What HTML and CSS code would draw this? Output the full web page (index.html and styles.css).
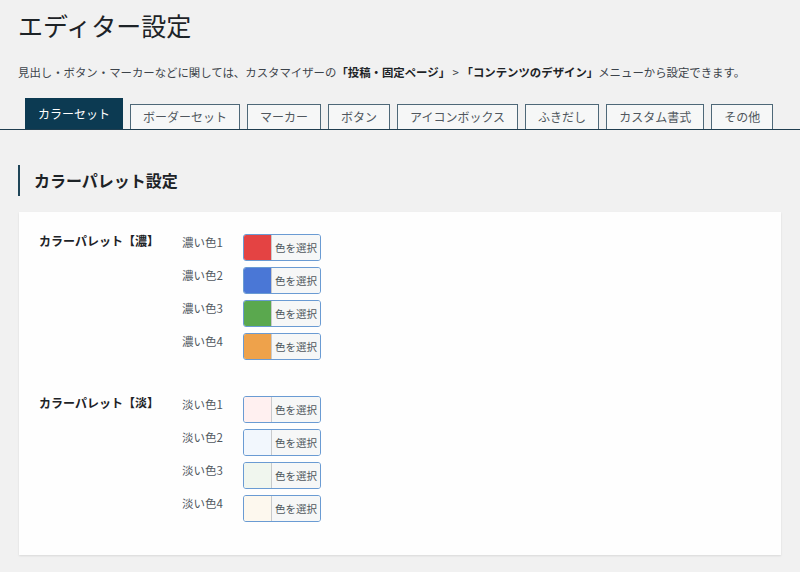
FILE: index.html
```html
<!DOCTYPE html>
<html lang="ja">
<head>
<meta charset="utf-8">
<title>エディター設定</title>
<link rel="stylesheet" href="styles.css">
</head>
<body>
<div class="page">
  <h1 class="title">エディター設定</h1>
  <p class="desc">見出し・ボタン・マーカーなどに関しては、カスタマイザーの<b>「投稿・固定ページ」</b> &gt; <b>「コンテンツのデザイン」</b>メニューから設定できます。</p>
</div>
<nav class="tabs">
  <span class="tab active">カラーセット</span>
  <span class="tab">ボーダーセット</span>
  <span class="tab">マーカー</span>
  <span class="tab">ボタン</span>
  <span class="tab">アイコンボックス</span>
  <span class="tab">ふきだし</span>
  <span class="tab">カスタム書式</span>
  <span class="tab">その他</span>
</nav>
<div class="page">
  <h2 class="section-title">カラーパレット設定</h2>
  <div class="card">
    <div class="group">
      <div class="group-title">カラーパレット【濃】</div>
      <div class="rows">
        <div class="row"><span class="label">濃い色1</span><button class="color-btn"><span class="swatch" style="background:#e44343"></span><span class="btn-text">色を選択</span></button></div>
        <div class="row"><span class="label">濃い色2</span><button class="color-btn"><span class="swatch" style="background:#4a77d6"></span><span class="btn-text">色を選択</span></button></div>
        <div class="row"><span class="label">濃い色3</span><button class="color-btn"><span class="swatch" style="background:#5aa84e"></span><span class="btn-text">色を選択</span></button></div>
        <div class="row"><span class="label">濃い色4</span><button class="color-btn"><span class="swatch" style="background:#eea24b"></span><span class="btn-text">色を選択</span></button></div>
      </div>
    </div>
    <div class="group">
      <div class="group-title">カラーパレット【淡】</div>
      <div class="rows">
        <div class="row"><span class="label">淡い色1</span><button class="color-btn"><span class="swatch" style="background:#fff0f0"></span><span class="btn-text">色を選択</span></button></div>
        <div class="row"><span class="label">淡い色2</span><button class="color-btn"><span class="swatch" style="background:#f2f7fd"></span><span class="btn-text">色を選択</span></button></div>
        <div class="row"><span class="label">淡い色3</span><button class="color-btn"><span class="swatch" style="background:#f0f6ee"></span><span class="btn-text">色を選択</span></button></div>
        <div class="row"><span class="label">淡い色4</span><button class="color-btn"><span class="swatch" style="background:#fdf8ee"></span><span class="btn-text">色を選択</span></button></div>
      </div>
    </div>
  </div>
</div>
</body>
</html>
```
FILE: styles.css
```css
* { box-sizing: border-box; }
html, body {
  margin: 0;
  padding: 0;
}
body {
  background: #f1f1f1;
  color: #1d2327;
  font-family: "Noto Sans CJK JP", "Noto Sans", sans-serif;
  width: 800px;
  height: 572px;
  overflow: hidden;
}
.page {
  padding: 0 19px 0 18px;
}
.title {
  margin: 0;
  padding-top: 8px;
  font-size: 25px;
  line-height: 34px;
  font-weight: 400;
  color: #1d2327;
}
.desc {
  margin: 20px 0 0;
  font-size: 11.4px;
  line-height: 20px;
  color: #3c434a;
  white-space: nowrap;
}
.desc b {
  font-weight: 700;
  color: #1d2327;
}
.tabs {
  margin-top: 16px;
  padding-left: 25px;
  display: flex;
  align-items: flex-end;
  gap: 7px;
  border-bottom: 1px solid #1f3d4f;
  height: 32px;
}
.tab {
  height: 25px;
  padding: 0 12px;
  border: 1px solid #4e6878;
  border-bottom: none;
  background: #f6f7f7;
  color: #50575e;
  font-size: 12px;
  line-height: 24px;
  white-space: nowrap;
}
.tab.active {
  height: 31px;
  line-height: 30px;
  background: #0c3a52;
  border-color: #0c3a52;
  color: #ffffff;
}
.section-title {
  margin: 35px 0 0;
  height: 31px;
  border-left: 2px solid #1f4558;
  padding-left: 14px;
  font-size: 16px;
  line-height: 31px;
  font-weight: 700;
  color: #1d2327;
}
.card {
  margin: 16px 0 0 1px;
  background: #fefefe;
  box-shadow: 0 1px 2px rgba(0, 0, 0, 0.10);
  padding: 22px 20px 34px 20px;
  height: 343px;
}
.group {
  display: flex;
  align-items: flex-start;
}
.group + .group {
  margin-top: 37px;
}
.group-title {
  width: 143px;
  font-size: 12px;
  line-height: 14px;
  font-weight: 700;
  color: #1d2327;
}
.rows {
  display: flex;
  flex-direction: column;
  gap: 7px;
}
.row {
  display: flex;
  align-items: flex-start;
  height: 26px;
}
.label {
  width: 61px;
  font-size: 11.5px;
  line-height: 16px;
  color: #50575e;
}
.color-btn {
  display: flex;
  width: 78px;
  height: 27px;
  padding: 0;
  margin: 0;
  border: 1px solid #6a9bd3;
  border-radius: 3px;
  overflow: hidden;
  background: #f6f7f7;
  font-family: inherit;
  cursor: pointer;
}
.swatch {
  width: 27px;
  height: 100%;
  flex: none;
}
.btn-text {
  flex: 1;
  height: 100%;
  border-left: 1px solid #c8cacc;
  background: #f6f7f7;
  color: #50575e;
  font-size: 10.5px;
  line-height: 25px;
  text-align: center;
}
```
